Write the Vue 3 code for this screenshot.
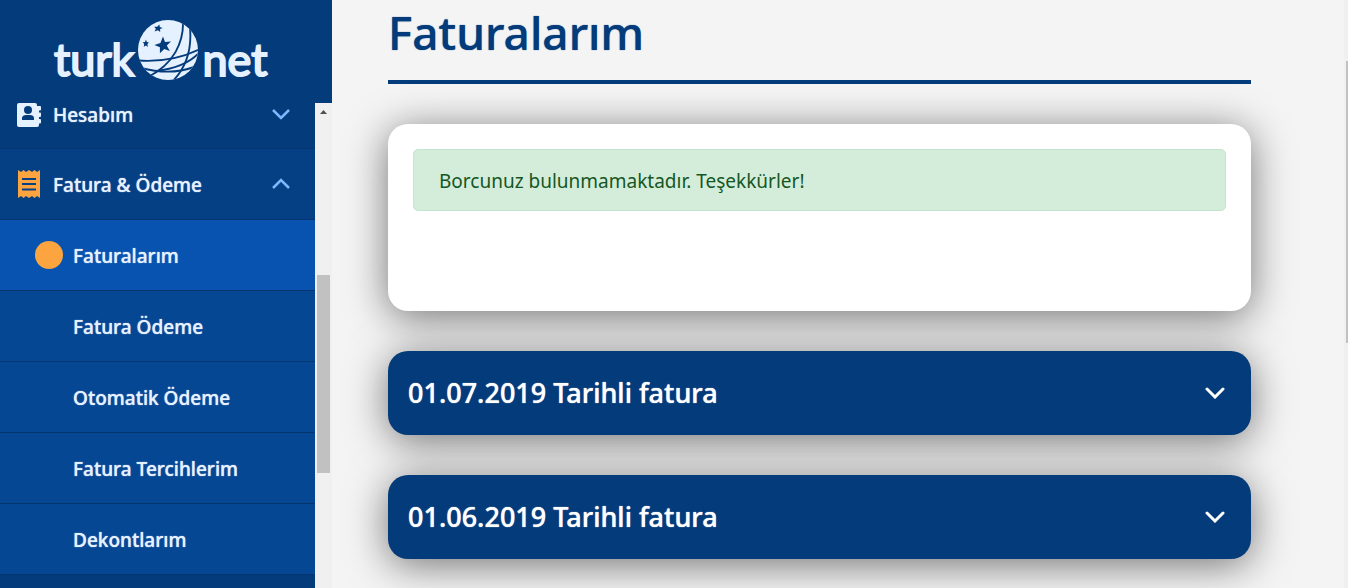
<script setup>
import { ref } from 'vue'

const subItems = ['Faturalarım', 'Fatura Ödeme', 'Otomatik Ödeme', 'Fatura Tercihlerim', 'Dekontlarım']
const active = ref('Faturalarım')
const invoices = ['01.07.2019', '01.06.2019']
</script>

<template>
  <div class="page">
    <aside class="sidebar">
      <a href="#" class="brand" aria-label="turknet">
        <span class="word">turk</span>
        <svg class="globe" viewBox="0 0 60 60" aria-hidden="true">
          <defs>
            <clipPath id="ball"><circle cx="30" cy="30" r="30" /></clipPath>
          </defs>
          <circle cx="30" cy="30" r="30" fill="#e6f1ff" />
          <g clip-path="url(#ball)" fill="none" stroke="#043b7b" stroke-width="1.9">
            <path d="M45 0C46 22 36 44 10 57" />
            <path d="M52 8C54 30 48 48 34 62" />
            <path d="M0 40.500C22 42 44 38 62 29" />
            <path d="M3 48C22 53 40 53 56 47" />
            <path d="M18 51C36 49 50 44 60 34" />
          </g>
          <g fill="#043b7b">
            <path d="M25 16.500l2 5.500 6-.6-4.200 4.200 3 5.400-5.500-2.100-4.400 4.300v-5.900l-5.500-2.200 6-2.200z" />
            <path d="M21.500 4.500l.2 2.600 3 .8-2.600 1.200.1 3-2.300-1.900-3.300 1.400 1.300-2.900-1.800-2 3 .1z" />
            <path d="M8 19.500l.8 2.500 2.200.4-1.600 1.600.5 3-1.900-1.500-2.300 1.300.5-2.700-1.500-1.900 2.300-.2z" />
          </g>
        </svg>
        <span class="word">net</span>
      </a>

      <div class="side-body">
        <nav class="menu">
          <button type="button" class="row first">
            <svg class="icon" viewBox="0 0 26 28" aria-hidden="true">
              <path fill="#e6f1ff" d="M3 2h16a2 2 0 0 1 2 2v1h3a1 1 0 0 1 1 1v2.500a1 1 0 0 1-1 1h-1v2h1a1 1 0 0 1 1 1V15a1 1 0 0 1-1 1h-1v2h1a1 1 0 0 1 1 1v2.500a1 1 0 0 1-1 1h-1V24a2 2 0 0 1-2 2H3a2 2 0 0 1-2-2V4a2 2 0 0 1 2-2z" />
              <circle cx="12" cy="9" r="4" fill="#043b7b" />
              <path fill="#043b7b" d="M6 19v-2c0-2 2-3 4-3h4c2 0 4 1 4 3v2z" />
            </svg>
            <span class="label">Hesabım</span>
            <svg class="chev" viewBox="0 0 18 12" aria-hidden="true"><path d="M1 1l8 8 8-8" /></svg>
          </button>
          <button type="button" class="row open" aria-expanded="true">
            <svg class="icon" viewBox="0 0 26 28" aria-hidden="true">
              <path fill="#fca540" d="M2 0l3 2 2.500-2L10 2l3-2 3 2 2.500-2L21 2l3-2v28l-3-2-2.500 2-2.500-2-3 2-3-2-2.500 2L5 26l-3 2z" />
              <path stroke="#054085" stroke-width="2" d="M6 9h14M6 14h14M6 19.500h14" />
            </svg>
            <span class="label">Fatura &amp; Ödeme</span>
            <svg class="chev" viewBox="0 0 18 12" aria-hidden="true"><path d="M1 10l8-8 8 8" /></svg>
          </button>
          <a
            v-for="item in subItems"
            :key="item"
            href="#"
            class="row sub"
            :class="{ active: item === active }"
            @click.prevent="active = item"
          >
            <span class="dot"></span>
            <span class="label">{{ item }}</span>
          </a>
        </nav>
        <div class="track" aria-hidden="true">
          <svg class="arrow" viewBox="0 0 17 17"><path d="M5 11h7L8.500 7z" fill="#505050" /></svg>
          <div class="thumb"></div>
        </div>
      </div>
    </aside>

    <main class="content">
      <h1>Faturalarım</h1>
      <section class="card">
        <p class="alert" role="status">Borcunuz bulunmamaktadır. Teşekkürler!</p>
      </section>
      <button v-for="date in invoices" :key="date" type="button" class="invoice">
        <span>{{ date }} Tarihli fatura</span>
        <svg viewBox="0 0 20 12" aria-hidden="true"><path d="M2 2l8 8 8-8" /></svg>
      </button>
    </main>

    <div class="page-track" aria-hidden="true"><div class="page-thumb"></div></div>
  </div>
</template>

<style>
body {
  margin: 0;
  overflow: hidden;
}
</style>

<style scoped>
.page {
  display: flex;
  height: 100vh;
  overflow: hidden;
  background: #f4f4f4;
  font-family: "Noto Sans", "Open Sans", sans-serif;
}
.sidebar {
  display: flex;
  flex-direction: column;
  flex: none;
  width: 332px;
  background: #043b7b;
}
.brand {
  display: flex;
  flex: none;
  gap: 4px;
  box-sizing: border-box;
  height: 103px;
  padding: 20px 0 0 54px;
  color: #e6f1ff;
  text-decoration: none;
}
.globe {
  width: 60px;
  height: 60px;
}
.word {
  padding-top: 9px;
  font-family: Lato, sans-serif;
  font-size: 45px;
  line-height: 60px;
  -webkit-text-stroke: 2px #e6f1ff;
  stroke-linejoin: round;
}
.side-body {
  display: flex;
  flex: 1;
  min-height: 0;
  overflow: hidden;
}
.menu {
  flex: 1;
}
.row {
  display: flex;
  align-items: center;
  box-sizing: border-box;
  width: 100%;
  height: 71px;
  padding: 0 25px 0 16px;
  border: 0;
  border-bottom: 1px solid #04356f;
  background: #043b7b;
  color: #e6f1ff;
  font-family: inherit;
  font-size: 19px;
  font-weight: 500;
  line-height: 22px;
  text-align: left;
  text-decoration: none;
  text-shadow: 0 0 1px currentColor;
}
.row.first {
  height: 46px;
  padding-bottom: 22px;
}
.row.open {
  background: #054085;
}
.row.sub {
  gap: 10px;
  padding-left: 35px;
  background: #064794;
}
.row.sub.active {
  background: #0753af;
}
.label {
  flex: 1;
}
.open .label,
.sub .label {
  padding-top: 2px;
}
.icon {
  flex: none;
  width: 26px;
  height: 28px;
  margin-right: 11px;
}
.chev {
  width: 18px;
  height: 12px;
  fill: none;
  stroke: #7db7ff;
  stroke-width: 2.5;
}
.dot {
  width: 28px;
  height: 28px;
  border-radius: 50%;
}
.active .dot {
  background: #fca540;
}
.track {
  flex: none;
  width: 17px;
  background: #f0f0f0;
}
.arrow {
  display: block;
  width: 17px;
  height: 17px;
}
.thumb {
  height: 198px;
  margin: 155px 2px 0;
  background: #c1c1c1;
}
.content {
  flex: 1;
  min-width: 0;
  padding: 0 93px 0 56px;
}
h1 {
  box-sizing: border-box;
  height: 84px;
  margin: 0 0 40px;
  border-bottom: 4px solid #043b7b;
  color: #043b7b;
  font-size: 46px;
  font-weight: 500;
  line-height: 64px;
  text-shadow: 0 0 1px currentColor;
}
.card,
.invoice {
  box-sizing: border-box;
  width: 100%;
  margin-bottom: 40px;
  border-radius: 20px;
  box-shadow: 0 6px 40px rgba(0, 0, 0, 0.53);
}
.card {
  min-height: 187px;
  padding: 25px;
  background: #fff;
}
.alert {
  margin: 0;
  padding: 19px 25px 17px;
  border: 1px solid #c3e6cb;
  border-radius: 5px;
  background: #d4edda;
  color: #155724;
  font-size: 19px;
  font-weight: 400;
  line-height: 24px;
}
.invoice {
  display: flex;
  align-items: center;
  justify-content: space-between;
  height: 84px;
  padding: 0 26px 0 20px;
  border: 0;
  background: #043b7b;
  color: #fff;
  font-family: inherit;
  font-size: 27px;
  font-weight: 500;
  line-height: 36px;
  text-shadow: 0 0 1px currentColor;
}
.invoice svg {
  width: 20px;
  height: 12px;
  fill: none;
  stroke: #fff;
  stroke-width: 3;
  stroke-linecap: round;
}
.page-track {
  flex: none;
  width: 4px;
  padding-top: 61px;
  background: #f0f0f0;
}
.page-thumb {
  height: 282px;
  margin-left: 2px;
  background: #c1c1c1;
}
</style>
